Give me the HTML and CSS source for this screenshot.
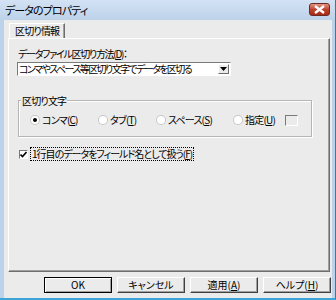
FILE: index.html
```html
<!DOCTYPE html>
<html lang="ja">
<head>
    <meta charset="UTF-8">
    <title>データのプロパティ</title>
    <link rel="stylesheet" href="styles.css">
</head>
<body>
    <div class="window">
        <div class="titlebar">
            <span class="title">データのプロパティ</span>
            <span class="close">
                <svg width="11" height="9" viewBox="0 0 11 9">
                    <path d="M1 1 L10 8 M10 1 L1 8" stroke="#fff" stroke-width="2.4" />
                </svg>
            </span>
        </div>
        <div class="client">
            <div class="tabs">
                <div class="tab">区切り情報</div>
            </div>
            <div class="panel">
                <div class="field-label">データファイル区切り方法(<u>D</u>)：</div>
                <div class="select">
                    <span class="select-text">コンマやスペース等区切り文字でデータを区切る</span>
                    <span class="select-arrow">
                        <svg width="7" height="4" viewBox="0 0 7 4"><path d="M0 0 H7 L3.5 4 Z" fill="#000" /></svg>
                    </span>
                </div>

                <div class="group">
                    <div class="legend">区切り文字</div>
                    <div class="radios">
                        <label class="radio r-comma"><span class="dot checked"></span>コンマ(<u>C</u>)</label>
                        <label class="radio r-tab"><span class="dot"></span>タブ(<u>T</u>)</label>
                        <label class="radio r-space"><span class="dot"></span>スペース(<u>S</u>)</label>
                        <label class="radio r-custom"><span class="dot"></span>指定(<u>U</u>)</label>
                        <span class="small-input"></span>
                    </div>
                </div>

                <label class="check">
                    <span class="box">
                        <svg width="7" height="7" viewBox="0 0 7 7"><path d="M0.5 3.5 L2.5 5.5 L6.5 1" stroke="#000" stroke-width="1.6" fill="none" /></svg>
                    </span>
                    <span class="check-text">1行目のデータをフィールド名として扱う(<u>F</u>)</span>
                </label>
            </div>
            <div class="buttons">
                <button class="btn default">OK</button>
                <button class="btn">キャンセル</button>
                <button class="btn">適用(<u>A</u>)</button>
                <button class="btn">ヘルプ(<u>H</u>)</button>
            </div>
        </div>
    </div>
</body>
</html>
```

FILE: styles.css
```css
body {
    margin: 0;
    font-family: "Noto Sans CJK JP", "Noto Sans", sans-serif;
    font-size: 10px;
    font-feature-settings: "palt";
    letter-spacing: -0.8px;
    color: #000;
    background: #fff;
}
.window {
    width: 336px;
    height: 300px;
    box-sizing: border-box;
    background: #bcd2ea;
    border-right: 1px solid #5a6f86;
    border-bottom: 2px solid #3aa5d6;
    display: flex;
    flex-direction: column;
}
.titlebar {
    height: 20px;
    flex-shrink: 0;
    display: flex;
    align-items: center;
    justify-content: space-between;
    padding: 0 5px 0 5px;
    background: linear-gradient(#d3e2f4, #bcd2ea);
}
.title {
    font-size: 11px;
    letter-spacing: -0.9px;
}
.close {
    width: 21px;
    height: 13px;
    margin-top: -2px;
    border: 1px solid #6b2a22;
    border-radius: 3px;
    background: linear-gradient(#e29683, #c0412c 50%, #a62a16);
    display: flex;
    align-items: center;
    justify-content: center;
    box-sizing: border-box;
}
.client {
    flex: 1;
    margin: 0 3px 0 4px;
    background: #ebebeb;
    padding: 3px 2px 0 4px;
    display: flex;
    flex-direction: column;
}
.tabs {
    display: flex;
    padding-left: 1px;
}
.tab {
    height: 14px;
    padding: 0 5px;
    line-height: 14px;
    border: 1px solid #fff;
    border-bottom: none;
    border-right: 1px solid #6e6e6e;
    box-shadow: -1px 0 0 #a0a0a0 inset;
}
.panel {
    height: 234px;
    box-sizing: border-box;
    border-top: 1px solid #fff;
    border-left: 1px solid #fff;
    border-right: 1px solid #6e6e6e;
    border-bottom: 1px solid #6e6e6e;
    box-shadow: -1px -1px 0 #a0a0a0 inset;
    padding: 8px 0 0 8px;
}
.field-label {
    height: 14px;
    line-height: 14px;
    padding-left: 1px;
    letter-spacing: -1.3px;
}
u {
    text-decoration: underline;
    text-underline-offset: 1px;
}
.select {
    margin-top: 1px;
    width: 214px;
    height: 14px;
    box-sizing: border-box;
    background: #fff;
    border: 1px solid #7a7a7a;
    border-right-color: #fff;
    border-bottom-color: #fff;
    display: flex;
    align-items: center;
    justify-content: space-between;
}
.select-text {
    padding-left: 1px;
    line-height: 12px;
    white-space: nowrap;
    letter-spacing: -1.6px;
}
.select-arrow {
    width: 11px;
    height: 10px;
    margin-right: 1px;
    background: #ebebeb;
    border: 1px solid #fff;
    border-right-color: #6e6e6e;
    border-bottom-color: #6e6e6e;
    box-sizing: border-box;
    display: flex;
    align-items: center;
    justify-content: center;
}
.group {
    position: relative;
    margin-top: 24px;
    margin-left: 1px;
    width: 294px;
    height: 37px;
    box-sizing: border-box;
    border: 1px solid #b5b5b5;
    box-shadow: 1px 1px 0 #fff, 1px 1px 0 #fff inset;
}
.legend {
    position: absolute;
    left: 2px;
    top: -8px;
    padding: 0 1px;
    background: #ebebeb;
    line-height: 15px;
}
.radios {
    display: flex;
    align-items: center;
    padding: 12px 0 0 12px;
}
.radio {
    display: flex;
    align-items: center;
    flex-shrink: 0;
    white-space: nowrap;
    line-height: 13px;
}
.r-comma {
    width: 68px;
}
.r-tab {
    width: 58px;
}
.r-space {
    width: 77px;
}
.r-custom {
    width: 51px;
}
.dot {
    width: 8px;
    height: 8px;
    margin-right: 3px;
    border-radius: 50%;
    background: #fff;
    box-shadow: 0 0 0 1px #c8c8c8;
    position: relative;
}
.dot.checked::after {
    content: "";
    position: absolute;
    left: 2px;
    top: 2px;
    width: 4px;
    height: 4px;
    border-radius: 50%;
    background: #000;
}
.small-input {
    width: 13px;
    height: 11px;
    flex-shrink: 0;
    box-sizing: border-box;
    border: 1px solid #7a7a7a;
    border-right-color: #fff;
    border-bottom-color: #fff;
    margin-top: 1px;
}
.check {
    display: flex;
    align-items: center;
    margin-top: 10px;
    margin-left: 2px;
}
.box {
    width: 9px;
    height: 9px;
    box-sizing: border-box;
    background: #fff;
    border: 1px solid #7a7a7a;
    border-right-color: #fff;
    border-bottom-color: #fff;
    display: flex;
    align-items: center;
    justify-content: center;
    margin-right: 2px;
}
.check-text {
    border: 1px dotted #000;
    line-height: 12px;
    padding: 0 1px;
    letter-spacing: -1px;
}
.buttons {
    display: flex;
    justify-content: flex-end;
    gap: 5px;
    padding: 5px 0 0 0;
    margin-right: -1px;
}
.btn {
    width: 68px;
    height: 16px;
    padding: 0;
    font: inherit;
    line-height: 12px;
    background: #ebebeb;
    border: 1px solid #fff;
    border-right-color: #404040;
    border-bottom-color: #404040;
    box-shadow: -1px -1px 0 #a0a0a0 inset;
    color: #000;
}
.btn.default {
    border-color: #000;
    box-shadow: 1px 1px 0 #fff inset, -1px -1px 0 #a0a0a0 inset;
}
```
